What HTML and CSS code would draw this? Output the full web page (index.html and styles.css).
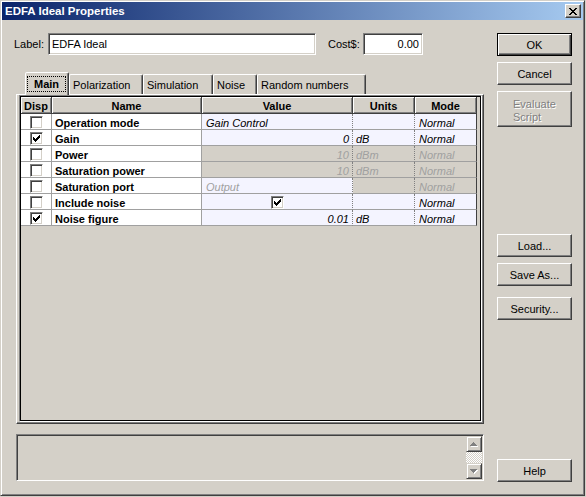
FILE: index.html
```html
<!DOCTYPE html>
<html lang="en">
<head>
    <meta charset="UTF-8">
    <meta name="viewport" content="width=device-width, initial-scale=1.0">
    <title>EDFA Ideal Properties</title>
    <link rel="stylesheet" href="styles.css">
</head>
<body>
    <div class="window">
        <div class="titlebar">
            <span class="title">EDFA Ideal Properties</span>
            <span class="close-btn">
                <svg width="8" height="7" viewBox="0 0 8 7"><path d="M0 0h2v1h-2zM6 0h2v1h-2zM1 1h2v1h-2zM5 1h2v1h-2zM2 2h4v1h-4zM3 3h2v1h-2zM2 4h4v1h-4zM1 5h2v1h-2zM5 5h2v1h-2zM0 6h2v1h-2zM6 6h2v1h-2z" fill="#000"/></svg>
            </span>
        </div>

        <div class="dialog">
            <div class="main-col">
                <div class="field-row">
                    <span class="field-label">Label:</span>
                    <div class="input label-input">EDFA Ideal</div>
                    <span class="field-label cost-label">Cost$:</span>
                    <div class="input cost-input">0.00</div>
                </div>

                <div class="tabs">
                    <div class="tab tab-main active"><span class="focus">Main</span></div>
                    <div class="tab tab-polar">Polarization</div>
                    <div class="tab tab-sim">Simulation</div>
                    <div class="tab tab-noise">Noise</div>
                    <div class="tab tab-random">Random numbers</div>
                </div>

                <div class="panel">
                    <div class="grid">
                        <table class="params">
                            <thead>
                                <tr>
                                    <th class="c-disp">Disp</th>
                                    <th class="c-name">Name</th>
                                    <th class="c-value">Value</th>
                                    <th class="c-units">Units</th>
                                    <th class="c-mode">Mode</th>
                                </tr>
                            </thead>
                            <tbody>
                                <tr>
                                    <td class="c-disp"><span class="check"></span></td>
                                    <td class="c-name">Operation mode</td>
                                    <td class="c-value text">Gain Control</td>
                                    <td class="c-units"></td>
                                    <td class="c-mode">Normal</td>
                                </tr>
                                <tr>
                                    <td class="c-disp"><span class="check"><svg width="7" height="7" viewBox="0 0 7 7"><path d="M0 2h1v3H0zM1 3h1v3H1zM2 4h1v3H2zM3 3h1v3H3zM4 2h1v3H4zM5 1h1v3H5zM6 0h1v3H6z" fill="#000"/></svg></span></td>
                                    <td class="c-name">Gain</td>
                                    <td class="c-value">0</td>
                                    <td class="c-units">dB</td>
                                    <td class="c-mode">Normal</td>
                                </tr>
                                <tr>
                                    <td class="c-disp"><span class="check"></span></td>
                                    <td class="c-name">Power</td>
                                    <td class="c-value off">10</td>
                                    <td class="c-units off">dBm</td>
                                    <td class="c-mode off">Normal</td>
                                </tr>
                                <tr>
                                    <td class="c-disp"><span class="check"></span></td>
                                    <td class="c-name">Saturation power</td>
                                    <td class="c-value off">10</td>
                                    <td class="c-units off">dBm</td>
                                    <td class="c-mode off">Normal</td>
                                </tr>
                                <tr>
                                    <td class="c-disp"><span class="check"></span></td>
                                    <td class="c-name">Saturation port</td>
                                    <td class="c-value text dim">Output</td>
                                    <td class="c-units off"></td>
                                    <td class="c-mode off">Normal</td>
                                </tr>
                                <tr>
                                    <td class="c-disp"><span class="check"></span></td>
                                    <td class="c-name">Include noise</td>
                                    <td class="c-value bool"><span class="check"><svg width="7" height="7" viewBox="0 0 7 7"><path d="M0 2h1v3H0zM1 3h1v3H1zM2 4h1v3H2zM3 3h1v3H3zM4 2h1v3H4zM5 1h1v3H5zM6 0h1v3H6z" fill="#000"/></svg></span></td>
                                    <td class="c-units"></td>
                                    <td class="c-mode">Normal</td>
                                </tr>
                                <tr>
                                    <td class="c-disp"><span class="check"><svg width="7" height="7" viewBox="0 0 7 7"><path d="M0 2h1v3H0zM1 3h1v3H1zM2 4h1v3H2zM3 3h1v3H3zM4 2h1v3H4zM5 1h1v3H5zM6 0h1v3H6z" fill="#000"/></svg></span></td>
                                    <td class="c-name">Noise figure</td>
                                    <td class="c-value">0.01</td>
                                    <td class="c-units">dB</td>
                                    <td class="c-mode">Normal</td>
                                </tr>
                            </tbody>
                        </table>
                    </div>
                </div>

                <div class="output">
                    <div class="scrollbar">
                        <div class="scroll-btn">
                            <svg width="8" height="5" viewBox="0 0 8 5"><path d="M4 1h1v1H4zM3 2h3v1H3zM2 3h5v1H2zM1 4h7v1H1z" fill="#fff"/><path d="M3 0h1v1H3zM2 1h3v1H2zM1 2h5v1H1zM0 3h7v1H0z" fill="#808080"/></svg>
                        </div>
                        <div class="scroll-track"></div>
                        <div class="scroll-btn">
                            <svg width="8" height="5" viewBox="0 0 8 5"><path d="M1 1h7v1H1zM2 2h5v1H2zM3 3h3v1H3zM4 4h1v1H4z" fill="#fff"/><path d="M0 0h7v1H0zM1 1h5v1H1zM2 2h3v1H2zM3 3h1v1H3z" fill="#808080"/></svg>
                        </div>
                    </div>
                </div>
            </div>

            <div class="side">
                <button class="btn btn-default">OK</button>
                <button class="btn btn-cancel">Cancel</button>
                <button class="btn btn-eval" disabled>Evaluate<br>Script</button>
                <button class="btn btn-load">Load...</button>
                <button class="btn btn-save">Save As...</button>
                <button class="btn btn-security">Security...</button>
                <button class="btn btn-help">Help</button>
            </div>
        </div>
    </div>
</body>
</html>
```

FILE: styles.css
```css
body {
    margin: 0;
    background-color: #d4d0c8;
    font-family: "Liberation Sans", Arial, sans-serif;
    font-size: 11px;
    color: #000;
}

/* window frame */
.window {
    box-sizing: border-box;
    width: 585px;
    height: 496px;
    padding: 1px;
    border: 1px solid;
    border-color: #d4d0c8 #404040 #404040 #d4d0c8;
    box-shadow: inset 1px 1px #fff, inset -1px -1px #808080;
    background-color: #d4d0c8;
}
.titlebar {
    display: flex;
    align-items: center;
    justify-content: space-between;
    height: 18px;
    padding: 0 2px 0 3px;
    background: linear-gradient(to right, #0a246a, #a6caf0);
}
.title {
    color: #fff;
    font-size: 11.5px;
    font-weight: bold;
}
.close-btn {
    box-sizing: border-box;
    display: flex;
    align-items: center;
    justify-content: center;
    width: 16px;
    height: 14px;
    background-color: #d4d0c8;
    border: 1px solid;
    border-color: #fff #404040 #404040 #fff;
    box-shadow: inset -1px -1px #808080;
}

.dialog {
    display: flex;
    gap: 13px;
    padding: 13px 0 0 12px;
}
.main-col {
    width: 470px;
}

/* label + cost */
.field-row {
    display: flex;
    align-items: center;
    height: 22px;
}
.field-label {
    width: 34px;
}
.cost-label {
    width: 35px;
    margin-left: 12px;
}
.input {
    box-sizing: border-box;
    height: 22px;
    padding: 0 3px;
    line-height: 20px;
    background-color: #fff;
    border: 1px solid;
    border-color: #808080 #fff #fff #808080;
    box-shadow: inset 1px 1px #404040, inset -1px -1px #d4d0c8;
}
.label-input {
    width: 268px;
}
.cost-input {
    width: 60px;
    text-align: right;
}

/* tabs */
.tabs {
    display: flex;
    align-items: flex-end;
    height: 22px;
    margin: 17px 0 0 11px;
}
.tab {
    box-sizing: border-box;
    height: 20px;
    padding-left: 3px;
    line-height: 20px;
    white-space: nowrap;
    border: 1px solid;
    border-bottom: none;
    border-color: #fff #404040 transparent #fff;
    border-radius: 2px 2px 0 0;
    box-shadow: inset -1px 0 #808080;
}
.tab.active {
    position: relative;
    height: 23px;
    margin-bottom: -1px;
    padding: 0;
    background-color: #d4d0c8;
    font-weight: bold;
}
.focus {
    display: block;
    margin: 3px 2px 0 1px;
    border: 1px dotted #000;
    line-height: 14px;
    text-align: center;
}
.tab-main { width: 44px; }
.tab-polar { width: 74px; }
.tab-sim { width: 70px; }
.tab-noise { width: 44px; }
.tab-random { width: 109px; }

/* tab page */
.panel {
    box-sizing: border-box;
    width: 468px;
    height: 330px;
    margin-left: 2px;
    padding: 0 1px 1px 2px;
    border: 1px solid;
    border-color: #fff #404040 #404040 #fff;
    box-shadow: inset -1px -1px #808080;
}
.grid {
    box-sizing: border-box;
    height: 327px;
    padding: 1px;
    border: 1px solid;
    border-color: #808080 #fff #fff #808080;
    box-shadow: inset 1px 1px #000, inset -1px -1px #000;
}

.params {
    table-layout: fixed;
    border-collapse: separate;
    border-spacing: 0;
    width: 456px;
}
.params th {
    box-sizing: border-box;
    height: 17px;
    padding: 2px 0 0;
    font-weight: bold;
    text-align: center;
    background-color: #d4d0c8;
    border-right: 1px solid #404040;
    border-bottom: 1px solid #404040;
    box-shadow: inset 1px 1px #fff, inset -1px -1px #808080;
}
.params td {
    height: 12px;
    padding: 3px 3px 0;
    line-height: 12px;
    white-space: nowrap;
    overflow: hidden;
    font-style: italic;
    background-color: #f4f4ff;
    border-right: 1px solid #a0a0a0;
    border-bottom: 1px solid #a0a0a0;
}
th.c-disp { width: 31px; }
th.c-name { width: 150px; }
th.c-value { width: 151px; }
th.c-units { width: 62px; }
th.c-mode { width: 62px; }

.params td.c-disp {
    height: 15px;
    padding: 0;
    background-color: #fff;
}
.params td.c-name {
    font-style: normal;
    font-weight: bold;
    background-color: #fff;
}
.params td.c-value {
    text-align: right;
    border-right: 1px dotted #808080;
}
.params td.c-value.text {
    padding-left: 4px;
    text-align: left;
}
.params td.c-value.bool {
    height: 15px;
    padding-top: 0;
    text-align: center;
}
.params td.c-units {
    border-right: 1px dotted #808080;
}
.params td.c-mode {
    padding-left: 4px;
    border-right: 1px solid #404040;
}
.params td.off {
    color: #a0a0a0;
    background-color: #d4d0c8;
}
.params td.dim {
    color: #a0a0a0;
}

.check {
    box-sizing: border-box;
    display: block;
    width: 13px;
    height: 13px;
    margin: 2px auto 0;
    padding: 2px 0 0 2px;
    background-color: #fff;
    border: 1px solid;
    border-color: #808080 #fff #fff #808080;
    box-shadow: inset 1px 1px #404040, inset -1px -1px #d4d0c8;
}
.check svg {
    display: block;
}
.bool .check {
    display: inline-block;
    vertical-align: top;
    margin-top: 1px;
}

/* message box */
.output {
    box-sizing: border-box;
    display: flex;
    justify-content: flex-end;
    width: 468px;
    height: 47px;
    margin: 10px 0 0 2px;
    padding: 1px;
    border: 1px solid;
    border-color: #808080 #fff #fff #808080;
    box-shadow: inset 1px 1px #404040, inset -1px -1px #d4d0c8;
}
.scrollbar {
    display: flex;
    flex-direction: column;
    width: 16px;
}
.scroll-btn {
    box-sizing: border-box;
    display: flex;
    align-items: center;
    justify-content: center;
    height: 16px;
    background-color: #d4d0c8;
    border: 1px solid;
    border-color: #d4d0c8 #404040 #404040 #d4d0c8;
    box-shadow: inset 1px 1px #fff, inset -1px -1px #808080;
}
.scroll-track {
    flex: 1;
    background-image: conic-gradient(#fff 25%, #d4d0c8 0 50%, #fff 0 75%, #d4d0c8 0);
    background-size: 2px 2px;
}

/* buttons */
.side {
    display: flex;
    flex-direction: column;
    width: 75px;
}
.btn {
    box-sizing: border-box;
    height: 23px;
    padding: 0;
    font: inherit;
    color: #000;
    background-color: #d4d0c8;
    border: 1px solid;
    border-color: #fff #404040 #404040 #fff;
    box-shadow: inset -1px -1px #808080;
}
.btn-default {
    border-color: #000;
    box-shadow: inset 1px 1px #fff, inset -1px -1px #404040, inset -2px -2px #808080;
}
.btn-cancel { margin-top: 6px; }
.btn-eval {
    height: 36px;
    margin-top: 6px;
    padding: 3px 0 0 15px;
    line-height: 13px;
    text-align: left;
    color: #808080;
    text-shadow: 1px 1px #fff;
}
.btn-load { margin-top: 107px; }
.btn-save { margin-top: 6px; }
.btn-security { margin-top: 11px; }
.btn-help { margin-top: 139px; }
```
